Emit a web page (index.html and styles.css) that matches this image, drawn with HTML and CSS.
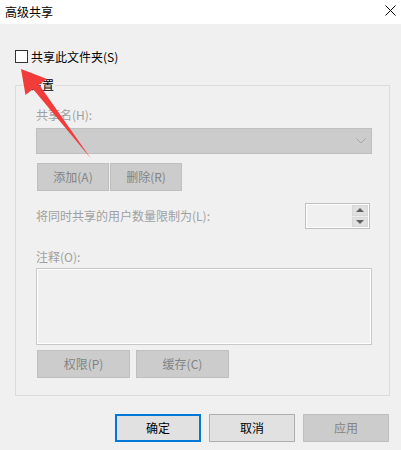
FILE: index.html
```html
<!DOCTYPE html>
<html>
  <head>
    <meta charset="UTF-8">
    <title>高级共享</title>
    <link rel="stylesheet" href="styles.css">
  </head>
  <body>
    <div class="titlebar">
      <span class="title">高级共享</span>
      <svg class="close" width="11" height="11" viewBox="0 0 11 11">
        <path d="M0.5 0.5 L10.5 10.5 M10.5 0.5 L0.5 10.5" stroke="#000" stroke-width="1" fill="none"/>
      </svg>
    </div>

    <div class="dialog">
      <label class="share-check">
        <span class="checkbox"></span>
        <span>共享此文件夹(S)</span>
      </label>

      <fieldset class="group">
        <legend>设置</legend>

        <div class="label">共享名(H):</div>
        <div class="combo">
          <svg class="chevron" width="10" height="6" viewBox="0 0 10 6">
            <path d="M0.5 0.5 L5 5 L9.5 0.5" stroke="#a8a8a8" stroke-width="1" fill="none"/>
          </svg>
        </div>

        <div class="btn-row">
          <button class="btn disabled" disabled>添加(A)</button>
          <button class="btn disabled" disabled>删除(R)</button>
        </div>

        <div class="limit-row">
          <span class="label">将同时共享的用户数量限制为(L):</span>
          <div class="spin">
            <div class="spin-field"></div>
            <div class="spin-buttons">
              <span class="spin-btn"><span class="tri-up"></span></span>
              <span class="spin-btn"><span class="tri-down"></span></span>
            </div>
          </div>
        </div>

        <div class="label note-label">注释(O):</div>
        <div class="textarea"></div>

        <div class="btn-row perm-row">
          <button class="btn wide disabled" disabled>权限(P)</button>
          <button class="btn wide disabled" disabled>缓存(C)</button>
        </div>
      </fieldset>

      <div class="footer">
        <button class="btn footer-btn primary">确定</button>
        <button class="btn footer-btn">取消</button>
        <button class="btn footer-btn disabled" disabled>应用</button>
      </div>
    </div>

    <svg class="arrow" width="401" height="450" viewBox="0 0 401 450">
      <polygon fill="#f23b3b" points="21,69 47,79 39,84.5 90.5,158 33,89 25.5,95"/>
    </svg>
  </body>
</html>
```

FILE: styles.css
```css
:root {
  --bg-color: #f0f0f0;
  --disabled-fill: #cccccc;
  --disabled-border: #bfbfbf;
  --disabled-text: #a0a0a0;
  --button-text-off: #838383;
  --accent: #0078d7;
}

html, body {
  margin: 0;
  padding: 0;
}

body {
  width: 401px;
  height: 450px;
  background: var(--bg-color);
  font-family: "Noto Sans CJK SC", "Noto Sans", sans-serif;
  font-size: 12px;
  line-height: 16px;
  color: #000;
  position: relative;
  overflow: hidden;
}

.titlebar {
  height: 24px;
  background: #fff;
  display: flex;
  align-items: center;
  justify-content: space-between;
  padding: 0 4px 0 5px;
  box-sizing: border-box;
}

.title {
  font-size: 12px;
}

.close {
  margin-bottom: 4px;
  margin-right: 1px;
}

.dialog {
  padding: 26px 12px 0 15px;
}

.share-check {
  display: flex;
  align-items: center;
  gap: 3px;
  height: 13px;
}

.checkbox {
  width: 13px;
  height: 13px;
  box-sizing: border-box;
  border: 1px solid #333;
  background: #fff;
}

.group {
  margin: 14px 0 0 0;
  padding: 14px 17px 17px 20px;
  border: 1px solid #dcdcdc;
  width: 375px;
  box-sizing: border-box;
  min-inline-size: 0;
}

.group legend {
  margin-left: -7px;
  padding: 0 1px;
  line-height: 16px;
}

.label {
  color: var(--disabled-text);
}

.combo {
  margin-top: 5px;
  height: 26px;
  box-sizing: border-box;
  border: 1px solid var(--disabled-border);
  background: var(--disabled-fill);
  display: flex;
  align-items: center;
  justify-content: flex-end;
  padding-right: 5px;
}

.chevron {
  display: block;
}

.btn {
  font-family: inherit;
  font-size: 12px;
  line-height: 16px;
  padding: 0;
  margin: 0;
  box-sizing: border-box;
  border: 1px solid #adadad;
  background: #e1e1e1;
  color: #000;
  height: 28px;
}

.btn.disabled {
  background: var(--disabled-fill);
  border-color: var(--disabled-border);
  color: var(--button-text-off);
}

.btn-row {
  display: flex;
  gap: 1px;
  margin-top: 9px;
  padding-left: 1px;
}

.btn-row .btn {
  width: 72px;
}

.limit-row {
  display: flex;
  align-items: center;
  justify-content: space-between;
  margin-top: 12px;
}

.spin {
  width: 65px;
  height: 26px;
  box-sizing: border-box;
  border: 1px solid #c0c0c0;
  margin-right: 2px;
  display: flex;
  box-shadow: inset 0 0 0 1px #fff;
}

.spin-field {
  flex: 1;
}

.spin-buttons {
  width: 16px;
  display: flex;
  flex-direction: column;
  gap: 1px;
  padding: 1px 1px 1px 0;
}

.spin-btn {
  flex: 1;
  background: #e0e0e0;
  border: 1px solid #d8d8d8;
  display: flex;
  align-items: center;
  justify-content: center;
}

.tri-up {
  width: 0;
  height: 0;
  border-left: 4px solid transparent;
  border-right: 4px solid transparent;
  border-bottom: 4px solid #606060;
}

.tri-down {
  width: 0;
  height: 0;
  border-left: 4px solid transparent;
  border-right: 4px solid transparent;
  border-top: 4px solid #606060;
}

.note-label {
  margin-top: 20px;
}

.textarea {
  margin-top: 3px;
  height: 77px;
  box-sizing: border-box;
  border: 1px solid #c8c8c8;
  box-shadow: inset 0 0 0 1px #fff;
}

.perm-row {
  margin-top: 5px;
  gap: 6px;
}

.perm-row .btn.wide {
  width: 93px;
}

.footer {
  display: flex;
  justify-content: flex-end;
  gap: 8px;
  margin-top: 18px;
}

.footer-btn {
  width: 86px;
}

.footer-btn.primary {
  border: 2px solid var(--accent);
}

.arrow {
  position: absolute;
  top: 0;
  left: 0;
  pointer-events: none;
}
```
